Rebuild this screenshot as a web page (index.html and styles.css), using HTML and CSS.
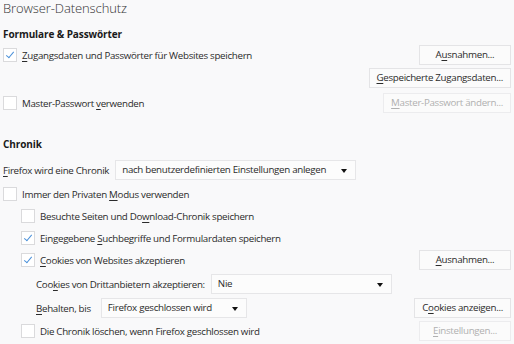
FILE: index.html
```html
<!DOCTYPE html>
<html lang="de">

<head>
  <meta charset="utf-8">
  <title>Browser-Datenschutz</title>
  <link rel="stylesheet" href="styles.css">
</head>

<body>
  <h1 class="title">Browser-Datenschutz</h1>

  <h2 class="section">Formulare &amp; Passwörter</h2>
  <div class="row top">
    <label class="check"><span class="box checked"></span><span><u>Z</u>ugangsdaten und Passwörter für Websites speichern</span></label>
    <button class="button">A<u>u</u>snahmen...</button>
  </div>
  <div class="row mid">
    <span></span>
    <button class="button"><u>G</u>espeicherte Zugangsdaten...</button>
  </div>
  <div class="row wide-gap">
    <label class="check"><span class="box"></span><span>Master-Passwort <u>v</u>erwenden</span></label>
    <button class="button" disabled><u>M</u>aster-Passwort ändern...</button>
  </div>

  <h2 class="section chronik">Chronik</h2>
  <div class="row first">
    <div class="field">
      <span><u>F</u>irefox wird eine Chronik</span>
      <div class="select wide">nach benutzerdefinierten Einstellungen anlegen<span class="arrow"></span></div>
    </div>
  </div>
  <div class="row mid">
    <label class="check"><span class="box"></span><span>Immer den Privaten <u>M</u>odus verwenden</span></label>
  </div>
  <div class="row sub">
    <label class="check"><span class="box"></span><span>Besuchte Seiten und Do<u>w</u>nload-Chronik speichern</span></label>
  </div>
  <div class="row sub">
    <label class="check"><span class="box checked"></span><span>Eingegebene <u>S</u>uchbegriffe und Formulardaten speichern</span></label>
  </div>
  <div class="row sub">
    <label class="check"><span class="box checked"></span><span><u>C</u>ookies von Websites akzeptieren</span></label>
    <button class="button"><u>A</u>usnahmen...</button>
  </div>
  <div class="row sub tall">
    <div class="field indent">
      <span>Coo<u>k</u>ies von Drittanbietern akzeptieren:</span>
      <div class="select third">Nie<span class="arrow"></span></div>
    </div>
  </div>
  <div class="row sub tall">
    <div class="field indent">
      <span class="keep"><u>B</u>ehalten, bis</span>
      <div class="select keep-select">Firefox geschlossen wird<span class="arrow"></span></div>
    </div>
    <button class="button">C<u>o</u>okies anzeigen...</button>
  </div>
  <div class="row sub mid">
    <label class="check"><span class="box"></span><span>Die Chronik löschen, wenn Firefox geschlossen wird</span></label>
    <button class="button" disabled><u>E</u>instellungen...</button>
  </div>
</body>

</html>
```

FILE: styles.css
```css
body,
html {
  margin: 0;
  padding: 0;
  height: 100%;
  overflow: hidden;
}

body {
  background-color: #f9f9fa;
  color: #2b2b2b;
  font-family: "Open Sans", "Noto Sans", sans-serif;
  font-size: 9.75px;
  letter-spacing: -0.3px;
  padding: 0 3px;
}

u {
  text-decoration-thickness: 1px;
  text-underline-offset: 2px;
}

.title {
  margin: 0;
  font-size: 13px;
  font-weight: 300;
  letter-spacing: -0.1px;
  line-height: 16px;
  color: #333;
}

.section {
  margin: 9px 0 0;
  font-size: 10px;
  font-weight: 700;
  letter-spacing: -0.1px;
  line-height: 18px;
  color: #1a1a1a;
}

.section.chronik {
  margin-top: 22px;
}

.row {
  height: 20px;
  margin-top: 2px;
  display: flex;
  align-items: center;
  justify-content: space-between;
}

.row.mid {
  margin-top: 3px;
}

.row.tall {
  margin-top: 4px;
}

.row.wide-gap {
  margin-top: 5px;
}

.row.first {
  height: 22px;
  margin-top: 6px;
}

.row.sub {
  padding-left: 18px;
}

.check {
  display: flex;
  align-items: center;
  white-space: nowrap;
}

.box {
  width: 14px;
  height: 14px;
  border: 1px solid #dadadc;
  background-color: #fff;
  margin-right: 5px;
  box-sizing: border-box;
  display: flex;
  align-items: center;
  justify-content: center;
}

.box.checked::after {
  content: "";
  width: 3px;
  height: 7px;
  border: solid #4a90d9;
  border-width: 0 1.5px 1.5px 0;
  transform: translateY(-1px) rotate(40deg);
}

.button {
  font-family: inherit;
  font-size: 9.75px;
  letter-spacing: -0.3px;
  color: #2b2b2b;
  background-color: #fbfbfb;
  border: 1px solid #e4e4e6;
  height: 20px;
  min-width: 92px;
  padding: 0 7px;
  line-height: 16px;
  white-space: nowrap;
}

.button:disabled {
  color: #b0b0b0;
  border-color: #ececee;
}

.field {
  display: flex;
  align-items: center;
  gap: 6px;
  white-space: nowrap;
}

.field.indent {
  padding-left: 15px;
}

.keep {
  margin-right: 4px;
}

.select {
  position: relative;
  height: 20px;
  box-sizing: border-box;
  border: 1px solid #e6e6e8;
  background-color: #fcfcfc;
  padding: 0 6px;
  line-height: 18px;
  overflow: hidden;
}

.select.wide {
  width: 241px;
}

.select.third {
  width: 181px;
}

.select.keep-select {
  width: 146px;
}

.arrow {
  position: absolute;
  right: 8px;
  top: 8px;
  border-left: 3px solid transparent;
  border-right: 3px solid transparent;
  border-top: 4px solid #111;
}
```
